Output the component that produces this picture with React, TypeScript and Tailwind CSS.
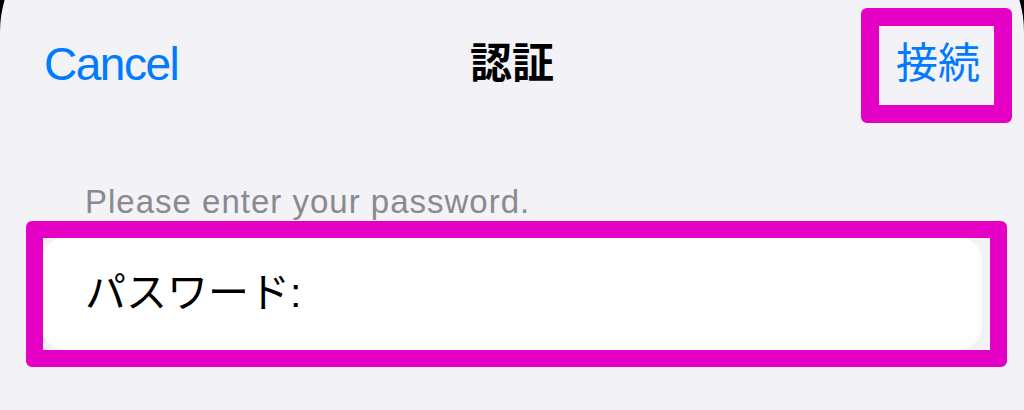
import React from 'react'

const FONT = "font-['Liberation_Sans','Noto_Sans_CJK_JP',sans-serif]"

// the dark slivers where the sheet's rounded top corners meet the black behind it
const Corner = ({ side }: { side: 'left' | 'right' }) => (
  <svg
    className={`absolute top-0 ${side === 'left' ? 'left-0' : 'right-0 -scale-x-100'}`}
    width="8"
    height="34"
    viewBox="0 0 8 34">
    <path d="M0 32 A114 114 0 0 1 4.6 0 L0 0 Z" fill="#000" />
  </svg>
)

const Highlight = ({ className }: { className: string }) => (
  <div
    className={`absolute rounded-[6px] border-[17px] border-[#e400c4] pointer-events-none ${className}`}
  />
)

export default function App() {
  return (
    <div className={`relative h-[410px] w-[1024px] overflow-hidden bg-[#f2f2f7] ${FONT}`}>
      <Corner side="left" />
      <Corner side="right" />

      <header className="grid h-[128px] grid-cols-[1fr_auto_1fr] items-center px-[44px]">
        <button className="justify-self-start text-[46px] leading-[46px] tracking-[-1.5px] text-[#007aff]">
          Cancel
        </button>
        <h1 className="text-[42px] font-bold leading-[42px] text-black">認証</h1>
        <button className="justify-self-end text-[42px] leading-[42px] text-[#007aff]">
          接続
        </button>
      </header>

      <p className="mt-[54px] pl-[85px] text-[33px] leading-[40px] tracking-[1px] text-[#8a8a8e]">
        Please enter your password.
      </p>

      <div className="mx-[42px] mt-[15px] flex h-[113px] items-center rounded-[24px] bg-white px-[43px]">
        <span className="text-[41px] leading-[41px] text-black">パスワード:</span>
      </div>

      <Highlight className="left-[861px] top-[8px] h-[115px] w-[151px] border-[18px]" />
      <Highlight className="left-[26px] top-[221px] h-[146px] w-[981px]" />
    </div>
  )
}
